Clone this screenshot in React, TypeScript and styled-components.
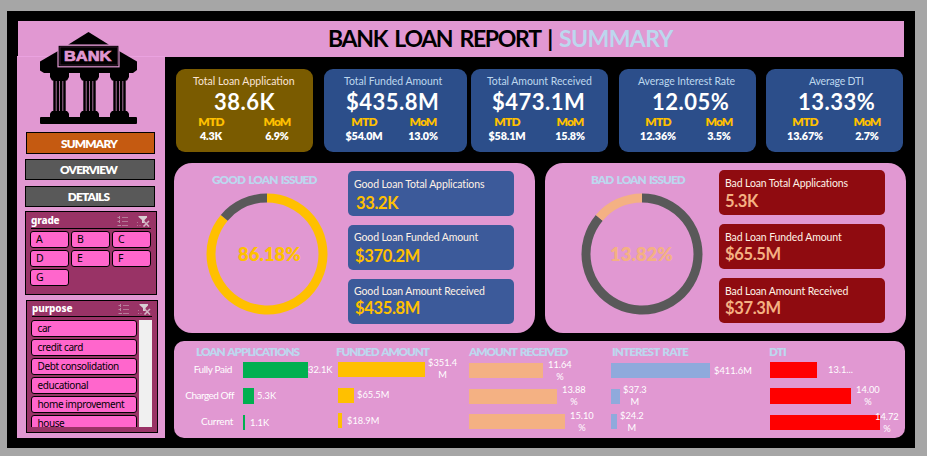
import React from "react";
import styled, { createGlobalStyle } from "styled-components";

const PINK = "#e198d2";
const ICE = "#bdd7ee";
const GOLD = "#ffc000";
const PEACH = "#f4b183";
const GREY = "#595959";

const GlobalStyle = createGlobalStyle`
  * { box-sizing: border-box; }
  body { margin: 0; background: #a6a6a6; overflow: hidden; }
`;

const Page = styled.div`
  width: 927px;
  height: 456px;
  padding: 11px 12px 8px 7px;
  background: #a6a6a6;
  font-family: Lato, "Liberation Sans", sans-serif;
  white-space: nowrap;
`;

const Frame = styled.div`
  width: 908px;
  height: 437px;
  padding: 10px 9px 10px 10px;
  background: #000;
`;

const Header = styled.header`
  width: 886px;
  height: 36px;
  margin-left: 1px;
  padding: 0 0 0 310px;
  background: ${PINK};
  color: #000;
  font-size: 23px;
  font-weight: 700;
  line-height: 34px;
  letter-spacing: -1.3px;
  word-spacing: 2.9px;
`;

const HeaderAccent = styled.span`
  color: ${ICE};
  letter-spacing: -0.6px;
`;

const Body = styled.div`
  display: flex;
  height: 381px;
`;

/* ---------- sidebar ---------- */

const Sidebar = styled.aside`
  width: 148px;
  height: 382px;
  margin-top: -1px;
  padding-left: 8px;
  background: ${PINK};
  border-top: 1px solid #eaa2e0;
  display: flex;
  flex-direction: column;
  align-items: flex-start;
`;

const Logo = styled.svg`
  flex: none;
  width: 98px;
  height: 93px;
  margin: -25px 0 0 15px;
`;

const NavButton = styled.button<{ $active?: boolean; $gap: number }>`
  flex: none;
  width: ${(p) => (p.$active ? 129 : 130)}px;
  height: ${(p) => (p.$active ? 22 : 21)}px;
  margin: ${(p) => p.$gap}px 0 0 ${(p) => (p.$active ? 1 : 0)}px;
  padding: 0 3px 0 0;
  border: 1px solid #000;
  background: ${(p) => (p.$active ? "#c55a11" : GREY)};
  color: #fff;
  font: 800 11.8px/19px Lato, sans-serif;
  letter-spacing: -0.8px;
`;

const Slicer = styled.section<{ $top: number; $left: number; $height: number }>`
  flex: none;
  width: 132px;
  height: ${(p) => p.$height}px;
  margin: ${(p) => p.$top}px 0 0 ${(p) => p.$left}px;
  padding: 0 5px 0 4px;
  border: 1px solid #000;
  background: #993366;
`;

const SlicerHead = styled.div<{ $height: number }>`
  display: flex;
  align-items: center;
  height: ${(p) => p.$height}px;
  margin-left: 1px;
  border-bottom: 1px solid #000;
  color: #fff;
  font: 800 10px/15px "Noto Sans", sans-serif;
  letter-spacing: -0.15px;
`;

const SlicerName = styled.span`
  flex: 1;
`;

const SlicerIcon = styled.svg`
  width: 13px;
  height: 12px;
  margin: 1px 1px 0 6px;
`;

const GradeGrid = styled.div`
  display: grid;
  grid-template-columns: 39px 39px 39px;
  gap: 2px;
  padding-top: 2px;
`;

const PurposeBody = styled.div`
  display: flex;
  gap: 2px;
  height: 110px;
  padding-top: 3px;
`;

const PurposeList = styled.div`
  width: 106px;
  display: flex;
  flex-direction: column;
  gap: 2px;
  overflow: hidden;
`;

const ScrollTrack = styled.div`
  width: 13px;
  background: #f0f0f0;
`;

const Choice = styled.div<{ $wide?: boolean }>`
  flex: none;
  height: 17px;
  padding-left: ${(p) => (p.$wide ? 5.5 : 5)}px;
  border: 1px solid #000;
  border-radius: 3px;
  background: #ff66cc;
  color: #000;
  font: 400 ${(p) => (p.$wide ? 10 : 10.5)}px/15px "Noto Sans", sans-serif;
  letter-spacing: ${(p) => (p.$wide ? -0.4 : 0)}px;
`;

/* ---------- main area ---------- */

const Main = styled.main`
  padding: 12px 0 0 9px;
`;

const KpiRow = styled.div`
  display: flex;
  padding-left: 2px;
`;

const KpiCard = styled.section<{ $gold?: boolean; $width: number; $gap: number }>`
  width: ${(p) => p.$width}px;
  height: 83px;
  margin-left: ${(p) => p.$gap}px;
  padding-top: 4px;
  border-radius: 9px;
  background: ${(p) => (p.$gold ? "#7a5b00" : "#2c4e8a")};
`;

const KpiLabel = styled.div<{ $gold?: boolean; $x: number; $ls: number }>`
  padding-left: ${(p) => p.$x}px;
  height: 16px;
  color: ${(p) => (p.$gold ? "#fbe5d6" : ICE)};
  font-size: 10.5px;
  line-height: 16px;
  letter-spacing: ${(p) => p.$ls}px;
`;

const KpiValue = styled.div<{ $x: number }>`
  padding-left: ${(p) => p.$x}px;
  height: 25px;
  color: #fff;
  font-size: 22px;
  font-weight: 700;
  line-height: 25px;
  letter-spacing: 0.5px;
`;

const KpiSplit = styled.div<{ $a: number; $b: number; $head?: boolean }>`
  display: grid;
  grid-template-columns: ${(p) => p.$b - p.$a}px 50px;
  margin-left: ${(p) => p.$a - 25}px;
  height: ${(p) => (p.$head ? 15 : 13)}px;
  color: ${(p) => (p.$head ? GOLD : "#fff")};
  font-size: ${(p) => (p.$head ? 12 : 10.8)}px;
  font-weight: 800;
  line-height: ${(p) => (p.$head ? 15 : 13)}px;
  letter-spacing: ${(p) => (p.$head ? -0.9 : -0.15)}px;
  text-align: center;
`;

const Centered = styled.span`
  width: 50px;
`;

const LoanRow = styled.div`
  display: flex;
  gap: 10px;
  margin-top: 11px;
`;

const LoanPanel = styled.section`
  display: flex;
  width: 361px;
  height: 170px;
  border-radius: 18px;
  background: ${PINK};
`;

const LoanChart = styled.div<{ $width: number; $x: number }>`
  width: ${(p) => p.$width}px;
  padding: 8px 0 0 ${(p) => p.$x}px;
`;

const PanelTitle = styled.h2<{ $x: number; $ls: number }>`
  margin: 0 0 0 ${(p) => p.$x}px;
  height: 17px;
  color: ${ICE};
  font-size: 11.8px;
  font-weight: 800;
  line-height: 17px;
  letter-spacing: ${(p) => p.$ls}px;
  word-spacing: 1.5px;
`;

const DonutBox = styled.div<{ $top: number }>`
  display: grid;
  width: 122px;
  height: 122px;
  margin-top: ${(p) => p.$top}px;
`;

const DonutSvg = styled.svg`
  grid-area: 1 / 1;
`;

const DonutValue = styled.div<{ $color: string; $x: number }>`
  grid-area: 1 / 1;
  align-self: center;
  padding: 0 0 1px ${(p) => p.$x}px;
  color: ${(p) => p.$color};
  font: 800 18.5px/22px Lato, sans-serif;
`;

const StatStack = styled.div<{ $top: number }>`
  display: flex;
  flex-direction: column;
  gap: 9px;
  padding-top: ${(p) => p.$top}px;
`;

const StatCard = styled.div<{ $bad?: boolean }>`
  width: 166px;
  height: 45px;
  border-radius: 5px;
  background: ${(p) => (p.$bad ? "#8f0b10" : "#3c5a9a")};
`;

const StatLabel = styled.div<{ $y: number }>`
  padding: ${(p) => p.$y}px 0 0 6px;
  color: #fff2e6;
  font-size: 10.5px;
  line-height: 14px;
  letter-spacing: -0.12px;
`;

const StatValue = styled.div<{ $gap: number; $x: number; $bad?: boolean }>`
  margin: ${(p) => p.$gap}px 0 0 ${(p) => p.$x}px;
  color: ${(p) => (p.$bad ? PEACH : GOLD)};
  font-size: 16.5px;
  font-weight: 700;
  line-height: 20px;
  letter-spacing: -0.35px;
`;

const BarPanel = styled.section`
  display: flex;
  width: 731px;
  height: 97px;
  margin-top: 8px;
  border-radius: 10px;
  background: ${PINK};
`;

const RowNames = styled.div`
  width: 69px;
  padding: 15px 9px 0 0;
  color: #fff;
  font-size: 10px;
  line-height: 26px;
  text-align: right;
`;

const RowName = styled.div<{ $ls: number; $inset: number }>`
  padding-right: ${(p) => p.$inset}px;
  letter-spacing: ${(p) => p.$ls}px;
`;

const BarColumn = styled.div<{ $width: number }>`
  width: ${(p) => p.$width}px;
  padding-top: 2px;
`;

const BarLine = styled.div`
  display: flex;
  height: 26px;
`;

const Bar = styled.div<{ $w: number; $h: number; $y: number; $color: string }>`
  flex: none;
  width: ${(p) => p.$w}px;
  height: ${(p) => p.$h}px;
  margin-top: ${(p) => p.$y}px;
  background: ${(p) => p.$color};
`;

const BarLabel = styled.div<{ $x: number; $y: number }>`
  flex: none;
  height: 24px;
  margin: ${(p) => p.$y}px 0 0 ${(p) => p.$x}px;
  color: #fff;
  font-size: 9.3px;
  line-height: 11.7px;
  text-align: center;
  white-space: pre;
`;

const BankLogo = () => (
  <Logo viewBox="40 32 98 93">
    <path d="M88.5 32 L109 44.7 H68 Z" />
    <path d="M58 51 L40 61.5 V70.5 L44 73 H133 L137 70 V61.5 L119 51 Z" />
    <rect x="58" y="45.2" width="61" height="21.6" fill="#000" stroke={PINK} strokeWidth="1.2" />
    <rect x="60" y="47" width="57.4" height="18" fill="#000" stroke="#59304f" strokeWidth="0.6" />
    <text
      x="64"
      y="60.9"
      fill={PINK}
      stroke={PINK}
      strokeWidth="0.7"
      fontFamily="Liberation Sans, sans-serif"
      fontWeight="700"
      fontSize="14"
      textLength="47.500"
      lengthAdjust="spacingAndGlyphs"
    >
      BANK
    </text>
    {[50, 80, 110].map((x) => (
      <g key={x}>
        <path d={`M${x} 72.500 h19 v4.500 l-2 3.500 h-15 l-2 -3.500 Z`} />
        <rect x={x + 3.3} y="80" width="12.400" height="31" />
        <path d={`M${x + 6.2} 81 v30 M${x + 9.5} 81 v30 M${x + 12.8} 81 v30`} stroke="#b87aab" strokeWidth="0.9" />
        <path d={`M${x} 117.500 v-4 l2 -2.500 h15 l2 2.500 v4 Z`} />
      </g>
    ))}
    <path d="M40 118 q0 -1 1 -1 H136 q1 0 1 1 V123 q0 1 -1 1 H41 q-1 0 -1 -1 Z" />
  </Logo>
);

const SlicerIcons = () => (
  <>
    <SlicerIcon viewBox="0 0 13 12" fill="none" stroke="#b57796" strokeWidth="1">
      <path d="M5 2.500 H11 M5 6.500 H11 M5 10.500 H11" />
      <path d="M0.500 2.500 H3 M2.500 1 V4 M0.500 6.500 H3 M2.500 5 V8 M0.500 10.500 H4" stroke="#b98aa2" />
    </SlicerIcon>
    <SlicerIcon viewBox="0 0 13 12">
      <path d="M1.500 1 H10 V2.500 L7.500 5 V8 H5 V5 L1.500 2 Z" fill="#d9cfd4" />
      <path d="M6.500 6 L12 11.500 M12 6 L6.500 11.500" stroke="#d3b3c3" strokeWidth="1.600" />
      <path d="M0 7.500 H1 M0 10.500 H1 M2.500 10.500 H3.500" stroke="#b57796" />
    </SlicerIcon>
  </>
);

const Donut = ({ ring, slice }: { ring: string; slice: string }) => {
  const angle = (-49.75 * Math.PI) / 180;
  const r = 56;
  return (
    <DonutSvg width="122" height="122" viewBox="-61 -61 122 122" fill="none" strokeWidth="9">
      <path d={`M0 ${-r} A${r} ${r} 0 1 1 ${r * Math.sin(angle)} ${-r * Math.cos(angle)}`} stroke={ring} />
      <path d={`M${r * Math.sin(angle)} ${-r * Math.cos(angle)} A${r} ${r} 0 0 1 0 ${-r}`} stroke={slice} />
    </DonutSvg>
  );
};

const kpis = [
  { label: "Total Loan Application", value: "38.6K", mtd: "4.3K", mom: "6.9%", w: 137, gap: 0, lx: 17, ls: 0, vx: 38, a: 35, b: 101 },
  { label: "Total Funded Amount", value: "$435.8M", mtd: "$54.0M", mom: "13.0%", w: 143, gap: 11, lx: 20, ls: -0.03, vx: 22, a: 40, b: 99 },
  { label: "Total Amount Received", value: "$473.1M", mtd: "$58.1M", mom: "15.8%", w: 137, gap: 4, lx: 16, ls: -0.05, vx: 21, a: 36, b: 99 },
  { label: "Average Interest Rate", value: "12.05%", mtd: "12.36%", mom: "3.5%", w: 137, gap: 11, lx: 19, ls: -0.1, vx: 33, a: 39, b: 100 },
  { label: "Average DTI", value: "13.33%", mtd: "13.67%", mom: "2.7%", w: 137, gap: 10, lx: 43, ls: -0.2, vx: 32, a: 39, b: 101 },
];

const goodStats = [
  { label: "Good Loan Total Applications", value: "33.2K", y: 6, gap: 2, x: 8 },
  { label: "Good Loan Funded Amount", value: "$370.2M", y: 5, gap: 2, x: 7 },
  { label: "Good Loan Amount Received", value: "$435.8M", y: 5, gap: 0, x: 7 },
];

const badStats = [
  { label: "Bad Loan Total Applications", value: "5.3K", y: 6, gap: 1, x: 6 },
  { label: "Bad Loan Funded Amount", value: "$65.5M", y: 6, gap: 0, x: 6 },
  { label: "Bad Loan Amount Received", value: "$37.3M", y: 6, gap: 0, x: 6 },
];

type BarRow = { w: number; h: number; y: number; text: string; tx: number; ty: number };
const columns: { title: string; tx: number; width: number; color: string; ls: number; rows: BarRow[] }[] = [
  {
    title: "LOAN APPLICATIONS", tx: -47, width: 95, color: "#00b050", ls: -1.08,
    rows: [
      { w: 65, h: 16, y: 2, text: "32.1K", tx: 0, ty: 4 },
      { w: 11, h: 16, y: 2, text: "5.3K", tx: 3, ty: 4 },
      { w: 2, h: 15, y: 3, text: "1.1K", tx: 5, ty: 5 },
    ],
  },
  {
    title: "FUNDED AMOUNT", tx: -2, width: 131, color: GOLD, ls: -1.15,
    rows: [
      { w: 87, h: 15, y: 2, text: "$351.4\nM", tx: 3, ty: -3 },
      { w: 16, h: 15, y: 2, text: "$65.5M", tx: 3, ty: 3 },
      { w: 4, h: 15, y: 1, text: "$18.9M", tx: 5, ty: 3 },
    ],
  },
  {
    title: "AMOUNT RECEIVED", tx: 0, width: 142, color: PEACH, ls: -1.1,
    rows: [
      { w: 74, h: 15, y: 3, text: "11.64\n%", tx: 5, ty: -1 },
      { w: 88, h: 15, y: 3, text: "13.88\n%", tx: 5, ty: -2 },
      { w: 96, h: 15, y: 2, text: "15.10\n%", tx: 5, ty: -2 },
    ],
  },
  {
    title: "INTEREST RATE", tx: 1, width: 159, color: "#8faadc", ls: -0.95,
    rows: [
      { w: 99, h: 15, y: 3, text: "$411.6M", tx: 4, ty: 5 },
      { w: 9, h: 15, y: 3, text: "$37.3\nM", tx: 3, ty: -2 },
      { w: 6, h: 15, y: 2, text: "$24.2\nM", tx: 3, ty: -2 },
    ],
  },
  {
    title: "DTI", tx: -1, width: 130, color: "#ff0000", ls: -1,
    rows: [
      { w: 47, h: 16, y: 2, text: "13.1...", tx: 11, ty: 4 },
      { w: 81, h: 16, y: 2, text: "14.00\n%", tx: 5, ty: -2 },
      { w: 110, h: 15, y: 3, text: "14.72\n%", tx: -5, ty: -1 },
    ],
  },
];

export default function App() {
  return (
    <Page>
      <GlobalStyle />
      <Frame>
        <Header>
          BANK LOAN REPORT | <HeaderAccent>SUMMARY</HeaderAccent>
        </Header>
        <Body>
          <Sidebar>
            <BankLogo />
            <NavButton $active $gap={7}>SUMMARY</NavButton>
            <NavButton $gap={5}>OVERVIEW</NavButton>
            <NavButton $gap={6}>DETAILS</NavButton>
            <Slicer $top={4} $left={0} $height={84}>
              <SlicerHead $height={17}><SlicerName>grade</SlicerName><SlicerIcons /></SlicerHead>
              <GradeGrid>
                {["A", "B", "C", "D", "E", "F", "G"].map((g) => <Choice key={g}>{g}</Choice>)}
              </GradeGrid>
            </Slicer>
            <Slicer $top={5} $left={1} $height={133}>
              <SlicerHead $height={16}><SlicerName>purpose</SlicerName><SlicerIcons /></SlicerHead>
              <PurposeBody>
                <PurposeList>
                  {["car", "credit card", "Debt consolidation", "educational", "home improvement", "house"].map((p) => (
                    <Choice key={p} $wide>{p}</Choice>
                  ))}
                </PurposeList>
                <ScrollTrack />
              </PurposeBody>
            </Slicer>
          </Sidebar>
          <Main>
            <KpiRow>
              {kpis.map((k, i) => (
                <KpiCard key={k.label} $gold={i === 0} $width={k.w} $gap={k.gap}>
                  <KpiLabel $gold={i === 0} $x={k.lx} $ls={k.ls}>{k.label}</KpiLabel>
                  <KpiValue $x={k.vx}>{k.value}</KpiValue>
                  <KpiSplit $head $a={k.a} $b={k.b}><Centered>MTD</Centered><Centered>MoM</Centered></KpiSplit>
                  <KpiSplit $a={k.a} $b={k.b}><Centered>{k.mtd}</Centered><Centered>{k.mom}</Centered></KpiSplit>
                </KpiCard>
              ))}
            </KpiRow>
            <LoanRow>
              <LoanPanel>
                <LoanChart $width={174} $x={32}>
                  <PanelTitle $x={6} $ls={-0.93}>GOOD LOAN ISSUED</PanelTitle>
                  <DonutBox $top={5}>
                    <Donut ring={GOLD} slice={GREY} />
                    <DonutValue $color={GOLD} $x={32}>86.18%</DonutValue>
                  </DonutBox>
                </LoanChart>
                <StatStack $top={8}>
                  {goodStats.map((s) => (
                    <StatCard key={s.label}>
                      <StatLabel $y={s.y}>{s.label}</StatLabel>
                      <StatValue $gap={s.gap} $x={s.x}>{s.value}</StatValue>
                    </StatCard>
                  ))}
                </StatStack>
              </LoanPanel>
              <LoanPanel>
                <LoanChart $width={174} $x={36}>
                  <PanelTitle $x={10} $ls={-0.93}>BAD LOAN ISSUED</PanelTitle>
                  <DonutBox $top={5}>
                    <Donut ring={GREY} slice={PEACH} />
                    <DonutValue $color={PEACH} $x={29}>13.82%</DonutValue>
                  </DonutBox>
                </LoanChart>
                <StatStack $top={7}>
                  {badStats.map((s) => (
                    <StatCard key={s.label} $bad>
                      <StatLabel $y={s.y}>{s.label}</StatLabel>
                      <StatValue $gap={s.gap} $x={s.x} $bad>{s.value}</StatValue>
                    </StatCard>
                  ))}
                </StatStack>
              </LoanPanel>
            </LoanRow>
            <BarPanel>
              <RowNames>
                <RowName $ls={-0.35} $inset={2}>Fully Paid</RowName>
                <RowName $ls={-0.5} $inset={0}>Charged Off</RowName>
                <RowName $ls={-0.25} $inset={1}>Current</RowName>
              </RowNames>
              {columns.map((c) => (
                <BarColumn key={c.title} $width={c.width}>
                  <PanelTitle $x={c.tx} $ls={c.ls}>{c.title}</PanelTitle>
                  {c.rows.map((r) => (
                    <BarLine key={r.text}>
                      <Bar $w={r.w} $h={r.h} $y={r.y} $color={c.color} />
                      <BarLabel $x={r.tx} $y={r.ty}>{r.text}</BarLabel>
                    </BarLine>
                  ))}
                </BarColumn>
              ))}
            </BarPanel>
          </Main>
        </Body>
      </Frame>
    </Page>
  );
}
